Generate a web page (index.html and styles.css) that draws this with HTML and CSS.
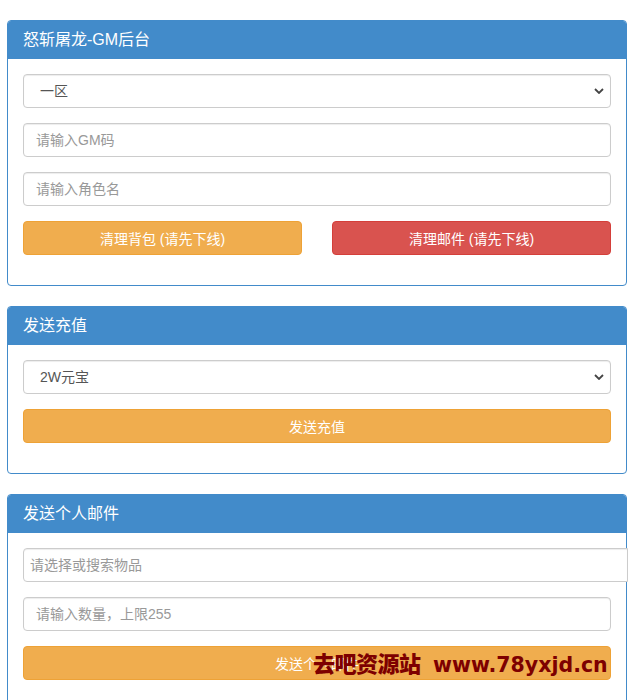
FILE: index.html
```html
<!DOCTYPE html>
<html lang="zh-CN">
<head>
    <meta charset="UTF-8">
    <meta name="viewport" content="width=device-width, initial-scale=1.0">
    <title>怒斩屠龙-GM后台</title>
    <link rel="stylesheet" href="styles.css">
</head>
<body>
    <div class="container">
        <div class="panel">
            <div class="panel-heading">怒斩屠龙-GM后台</div>
            <div class="panel-body">
                <select class="form-control">
                    <option>一区</option>
                    <option>二区</option>
                </select>
                <input class="form-control" type="text" placeholder="请输入GM码">
                <input class="form-control" type="text" placeholder="请输入角色名">
                <div class="btn-row">
                    <button class="btn btn-warning">清理背包 (请先下线)</button>
                    <button class="btn btn-danger">清理邮件 (请先下线)</button>
                </div>
            </div>
        </div>

        <div class="panel">
            <div class="panel-heading">发送充值</div>
            <div class="panel-body">
                <select class="form-control">
                    <option>2W元宝</option>
                    <option>5W元宝</option>
                </select>
                <button class="btn btn-warning btn-block">发送充值</button>
            </div>
        </div>

        <div class="panel">
            <div class="panel-heading">发送个人邮件</div>
            <div class="panel-body">
                <input class="form-control search-box" type="text" placeholder="请选择或搜索物品">
                <input class="form-control" type="text" placeholder="请输入数量，上限255">
                <div class="btn-wrap">
                    <button class="btn btn-warning btn-block">发送个人邮件</button>
                    <span class="watermark">去吧资源站 <span class="wm-url">www.78yxjd.cn</span></span>
                </div>
            </div>
        </div>
    </div>
</body>
</html>
```

FILE: styles.css
```css
* {
    margin: 0;
    padding: 0;
    box-sizing: border-box;
}

body {
    font-family: 'Liberation Sans', 'Noto Sans CJK SC', sans-serif;
    font-size: 14px;
    color: #555;
    background: #fff;
}

.container {
    padding: 20px 7px 0 7px;
}

.panel {
    border: 1px solid #428bca;
    border-radius: 4px;
    margin-bottom: 20px;
    background: #fff;
}

.panel-heading {
    background: #428bca;
    color: #fff;
    font-size: 16px;
    line-height: 19px;
    padding: 9px 15px 10px;
    border-radius: 3px 3px 0 0;
}

.panel-body {
    padding: 15px 15px 30px;
}

.form-control {
    display: block;
    width: 100%;
    height: 34px;
    padding: 6px 12px;
    margin-bottom: 15px;
    font-family: inherit;
    font-size: 14px;
    color: #555;
    background: #fff;
    border: 1px solid #ccc;
    border-radius: 4px;
    box-shadow: inset 0 1px 1px rgba(0, 0, 0, 0.075);
    outline: none;
}

.form-control::placeholder {
    color: #999;
}

select.form-control {
    appearance: none;
    -webkit-appearance: none;
    padding-left: 16px;
    background-image: url("data:image/svg+xml,%3Csvg xmlns='http://www.w3.org/2000/svg' width='10' height='6' viewBox='0 0 10 6'%3E%3Cpath d='M1 1l4 4 4-4' fill='none' stroke='%23444' stroke-width='1.8'/%3E%3C/svg%3E");
    background-repeat: no-repeat;
    background-position: right 6px center;
}

.search-box {
    width: calc(100% + 17px);
    padding-left: 6px;
    border-radius: 4px 0 0 4px;
}

.btn {
    display: inline-block;
    height: 34px;
    padding: 6px 12px;
    font-family: inherit;
    font-size: 14px;
    color: #fff;
    border: 1px solid transparent;
    border-radius: 4px;
    cursor: pointer;
}

.btn-warning {
    background: #f0ad4e;
    border-color: #eea236;
}

.btn-danger {
    background: #d9534f;
    border-color: #d43f3a;
}

.btn-block {
    display: block;
    width: 100%;
}

.btn-row {
    display: flex;
    gap: 30px;
}

.btn-row .btn {
    flex: 1;
}

.btn-wrap {
    position: relative;
}

/* watermark stamped over the last button */
.watermark {
    position: absolute;
    left: 290px;
    top: 3px;
    font-family: 'Noto Sans CJK SC', sans-serif;
    font-size: 22px;
    font-weight: 900;
    line-height: 26px;
    color: #7d0000;
    white-space: nowrap;
    letter-spacing: -0.5px;
}

.wm-url {
    font-family: 'DejaVu Sans', sans-serif;
    font-weight: bold;
    font-size: 20.5px;
    margin-left: 8px;
    letter-spacing: 0;
}
```
